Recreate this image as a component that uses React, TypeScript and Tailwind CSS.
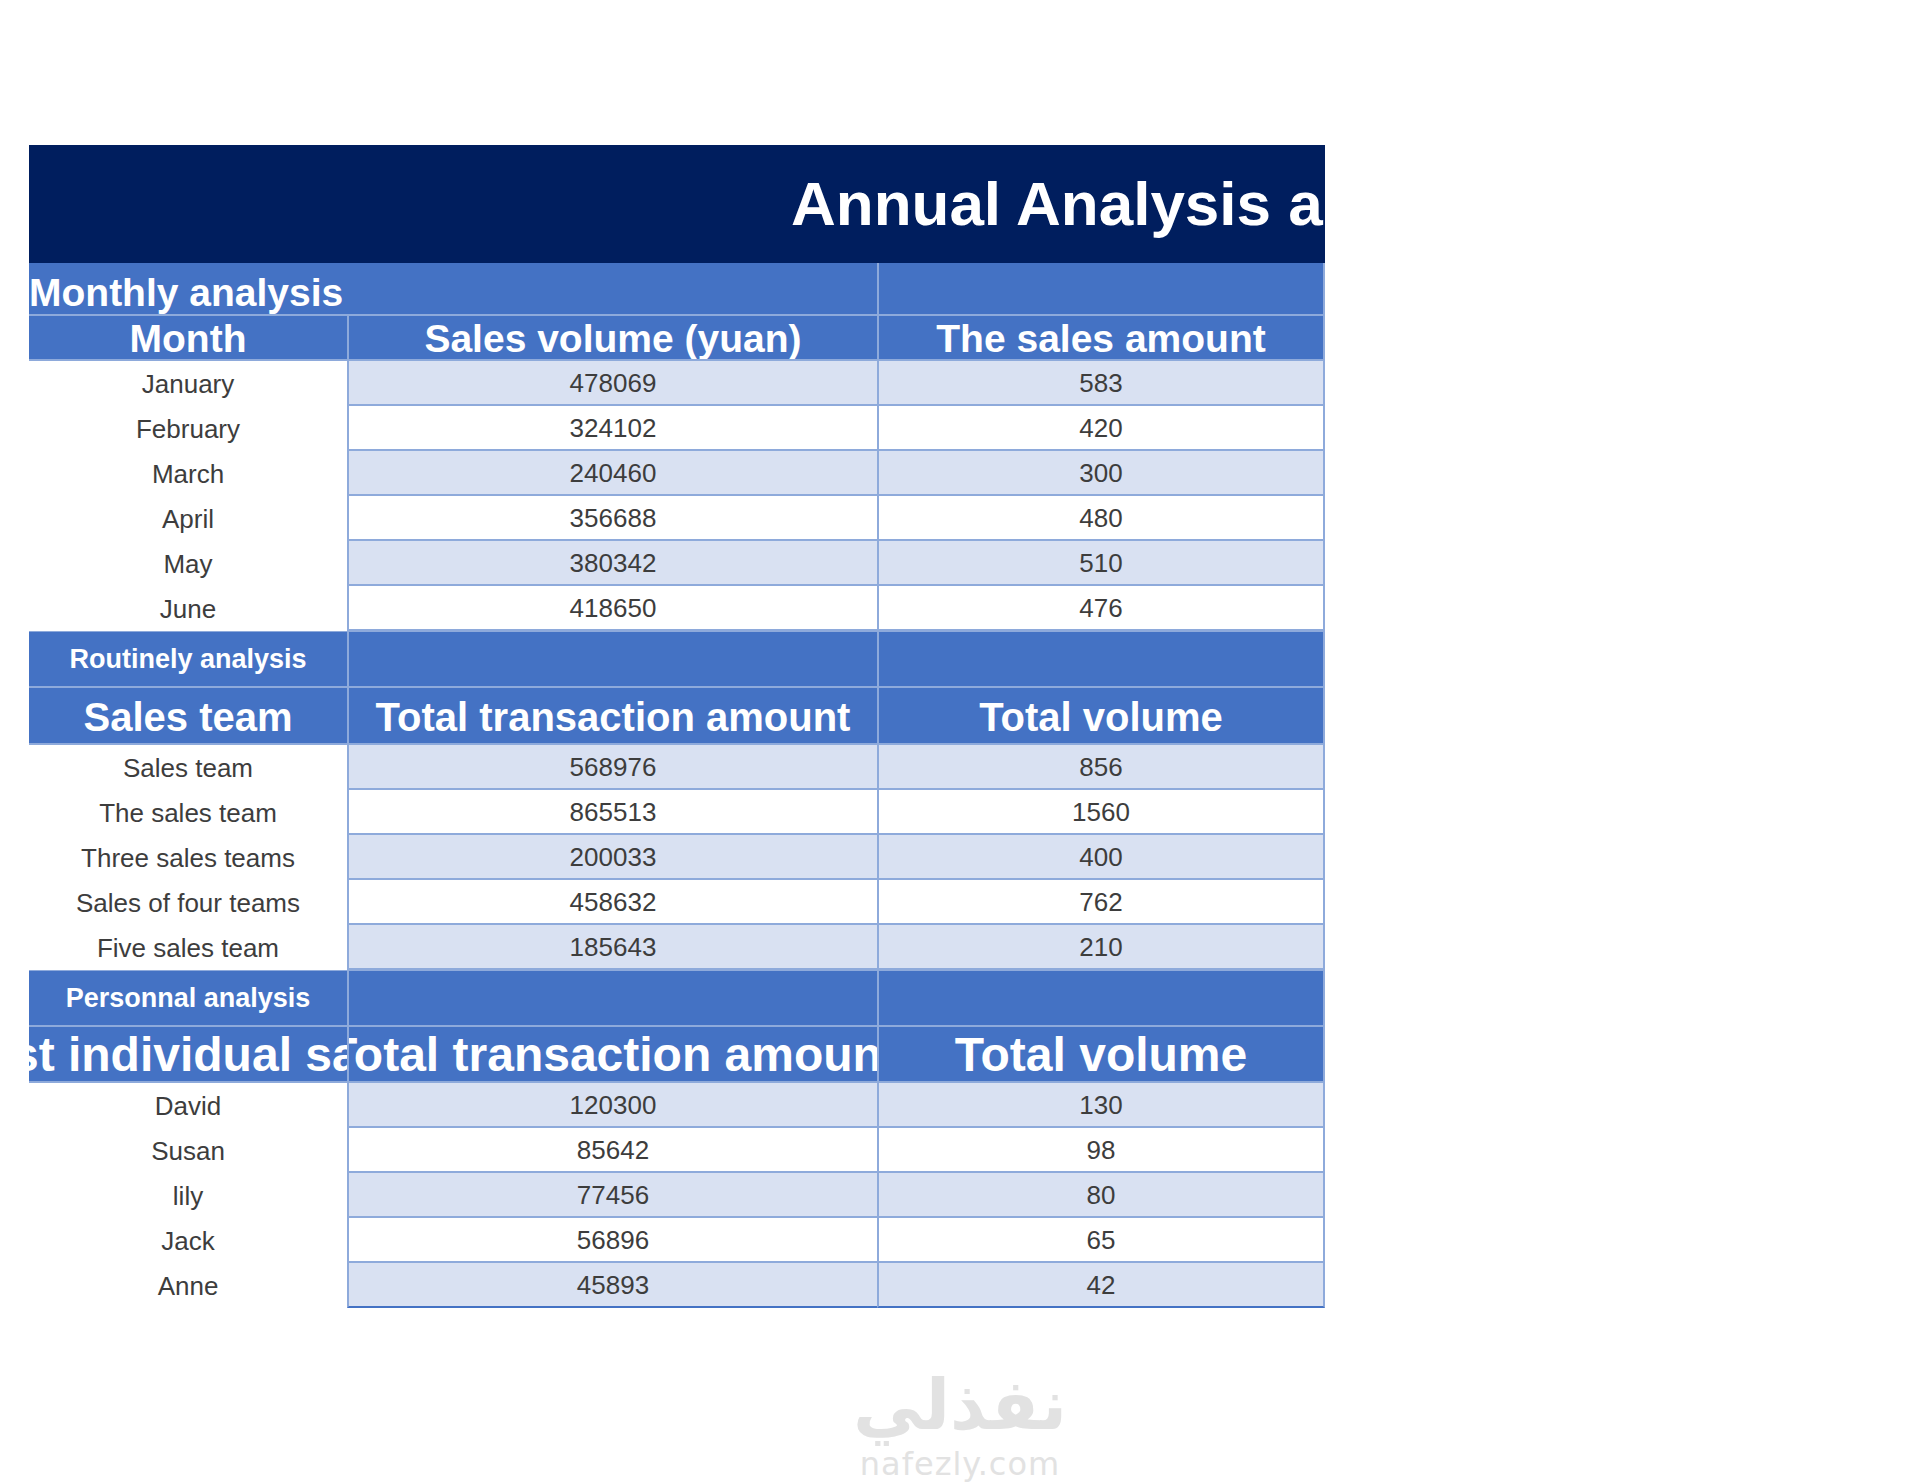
import React from "react";

const MONTHS = [
  ["January", "478069", "583"],
  ["February", "324102", "420"],
  ["March", "240460", "300"],
  ["April", "356688", "480"],
  ["May", "380342", "510"],
  ["June", "418650", "476"],
];

const TEAMS = [
  ["Sales team", "568976", "856"],
  ["The sales team", "865513", "1560"],
  ["Three sales teams", "200033", "400"],
  ["Sales of four teams", "458632", "762"],
  ["Five sales team", "185643", "210"],
];

const PEOPLE = [
  ["David", "120300", "130"],
  ["Susan", "85642", "98"],
  ["lily", "77456", "80"],
  ["Jack", "56896", "65"],
  ["Anne", "45893", "42"],
];

const GRID = "grid grid-cols-[318px_530px_448px]";

function DataRows({ rows, last }: { rows: string[][]; last?: boolean }) {
  return (
    <>
      {rows.map((r, i) => {
        const shaded = i % 2 === 0 ? "bg-[#d9e1f2]" : "bg-white";
        const bottom =
          last && i === rows.length - 1 ? "border-b-2 border-b-[#4472c4]" : "border-b-2 border-b-[#8eaadb]";
        return (
          <div key={i} className={`${GRID} h-[45px] text-[26px] text-[#3d3d3d]`}>
            <div className="flex items-center justify-center bg-white pt-[2px]">{r[0]}</div>
            <div className={`flex items-center justify-center pt-[2px] border-l-2 border-[#8eaadb] ${bottom} ${shaded}`}>
              {r[1]}
            </div>
            <div className={`flex items-center justify-center pt-[2px] border-x-2 border-[#8eaadb] ${bottom} ${shaded}`}>
              {r[2]}
            </div>
          </div>
        );
      })}
    </>
  );
}

function SectionRow({ label }: { label: string }) {
  return (
    <div className={`${GRID} h-[57px] bg-[#4472c4] text-white font-bold text-[27px] border-t border-[#8eaadb]`}>
      <div className="flex items-center justify-center border-b-2 border-[#8eaadb]">{label}</div>
      <div className="border-l-2 border-b-2 border-[#8eaadb]" />
      <div className="border-x-2 border-b-2 border-[#8eaadb]" />
    </div>
  );
}

function HeaderRow({ labels, size, height }: { labels: string[]; size: string; height: string }) {
  return (
    <div className={`${GRID} ${height} bg-[#4472c4] text-white font-bold ${size} leading-none`}>
      <div className="flex items-center justify-center overflow-hidden whitespace-nowrap border-b-2 border-[#8eaadb] pt-[2px]">
        <span className="shrink-0">{labels[0]}</span>
      </div>
      <div className="flex items-center justify-center overflow-hidden whitespace-nowrap border-l-2 border-b-2 border-[#8eaadb] pt-[2px]">
        <span className="shrink-0">{labels[1]}</span>
      </div>
      <div className="flex items-center justify-center overflow-hidden whitespace-nowrap border-x-2 border-b-2 border-[#8eaadb] pt-[2px]">
        <span className="shrink-0">{labels[2]}</span>
      </div>
    </div>
  );
}

export default function App() {
  return (
    <main className="w-full min-h-[1484px] bg-white font-['Liberation_Sans',Arial,sans-serif] overflow-hidden">
      <div className="ml-[29px] pt-[145px] w-[1296px]">
        {/* title band */}
        <div className="h-[118px] bg-[#001e5e] flex items-center overflow-hidden whitespace-nowrap pl-[762px]">
          <span className="text-white font-bold text-[62px] leading-none shrink-0">
            Annual Analysis and Statistics Table
          </span>
        </div>

        {/* monthly */}
        <div className={`${GRID} h-[53px] bg-[#4472c4] text-white font-bold`}>
          <div className="col-span-2 flex items-end whitespace-nowrap border-b-2 border-[#8eaadb]">
            <span className="text-[39px] leading-[1.08]">Monthly analysis</span>
          </div>
          <div className="border-x-2 border-b-2 border-[#8eaadb]" />
        </div>
        <HeaderRow labels={["Month", "Sales volume (yuan)", "The sales amount"]} size="text-[39px]" height="h-[45px]" />
        <DataRows rows={MONTHS} />

        {/* routinely */}
        <SectionRow label="Routinely analysis" />
        <HeaderRow labels={["Sales team", "Total transaction amount", "Total volume"]} size="text-[40px]" height="h-[57px]" />
        <DataRows rows={TEAMS} />

        {/* personnal */}
        <SectionRow label="Personnal analysis" />
        <HeaderRow labels={["Best individual sales", "Total transaction amount", "Total volume"]} size="text-[48px]" height="h-[56px]" />
        <DataRows rows={PEOPLE} last />
      </div>

      {/* watermark */}
      <div className="flex flex-col items-center mt-[62px] text-[#e2e2e2] select-none">
        <span dir="rtl" className="font-['DejaVu_Sans',sans-serif] font-bold text-[70px] leading-[1]">
          نفذلي
        </span>
        <span className="font-['DejaVu_Sans',sans-serif] text-[32px] leading-none mt-[8px] tracking-[1px]">
          nafezly.com
        </span>
      </div>
    </main>
  );
}
